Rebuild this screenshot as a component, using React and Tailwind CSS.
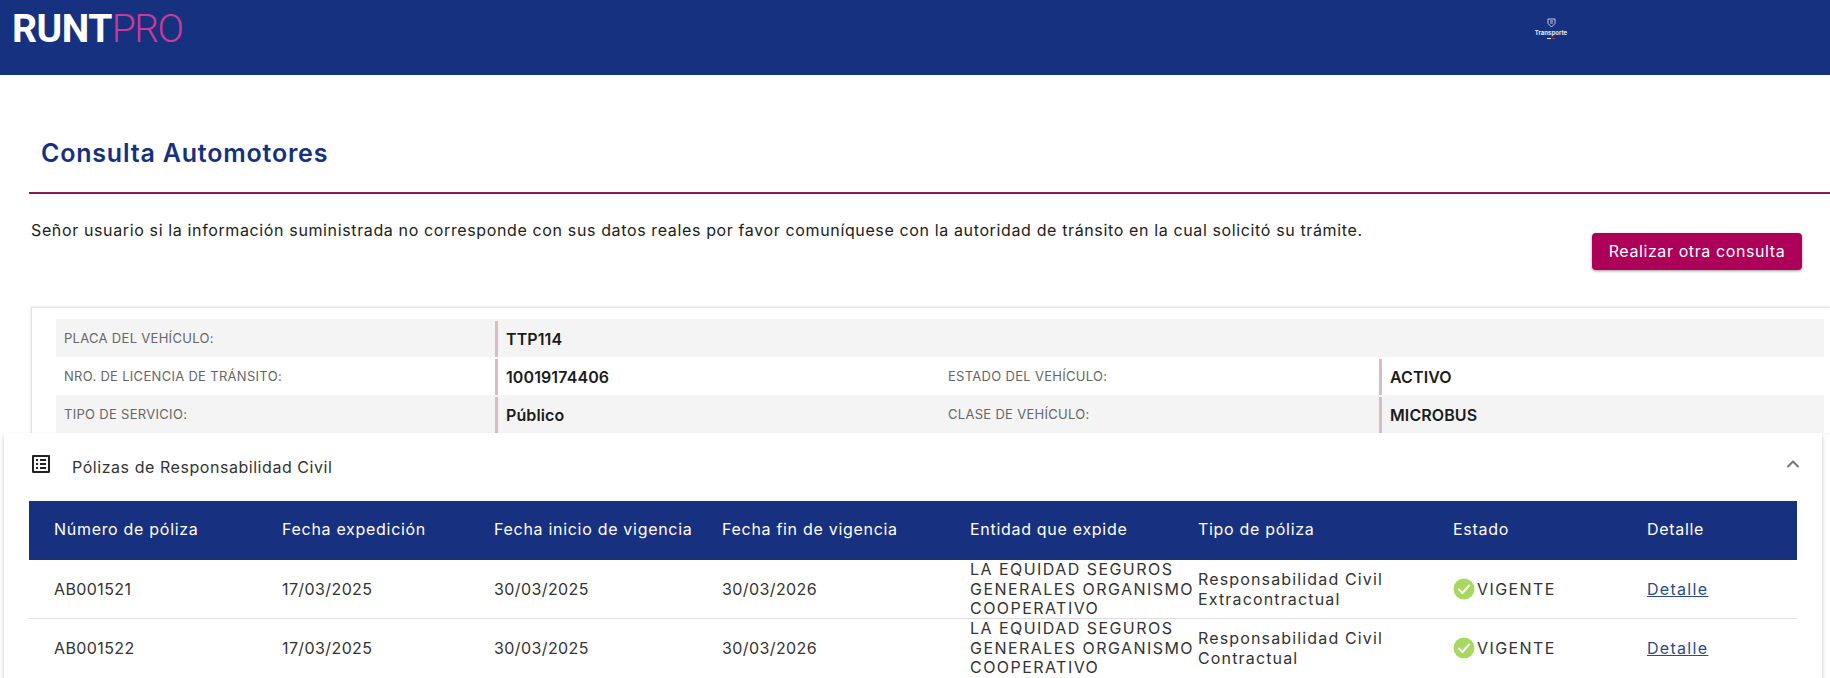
import { ChevronUp } from 'lucide-react';
import { MdOutlineListAlt } from 'react-icons/md';

const polizas = [
    { numero: 'AB001521', expedicion: '17/03/2025', inicio: '30/03/2025', fin: '30/03/2026', tipo: ['Responsabilidad Civil', 'Extracontractual'] },
    { numero: 'AB001522', expedicion: '17/03/2025', inicio: '30/03/2025', fin: '30/03/2026', tipo: ['Responsabilidad Civil', 'Contractual'] },
];

const columnas = ['Número de póliza', 'Fecha expedición', 'Fecha inicio de vigencia', 'Fecha fin de vigencia', 'Entidad que expide', 'Tipo de póliza', 'Estado', 'Detalle'];

const gridTabla = 'grid grid-cols-[228px_212px_228px_248px_228px_255px_194px_1fr] pl-[25px]';

const Label = ({ children }) => (
    <div className="flex items-center pl-2 pt-[1px] text-[13px] text-[#666] tracking-[0.3px]">{children}</div>
);

const Valor = ({ children }) => (
    <div className="flex items-center mt-[2px] pb-[1px] h-[36px] border-l-[3px] border-[#d9bcc3] pl-[8px] text-[16px] font-semibold text-[#1c1c1c] tracking-[0.1px]">{children}</div>
);

const Check = () => (
    <svg width="22" height="22" viewBox="0 0 22 22" className="shrink-0">
        <circle cx="11" cy="11" r="10.5" fill="#a8d95f" />
        <path d="M6 11.500l3.500 3.500L16 7.500" fill="none" stroke="#fff" strokeWidth="2" strokeLinecap="round" strokeLinejoin="round" />
    </svg>
);

const App = () => {
    return (
        <div className="h-screen overflow-hidden bg-white font-['Inter',sans-serif]">
            {/* Header */}
            <header className="flex h-[75px] bg-[#163180]">
                <div className="ml-[12px] mt-[7px] h-[44px] w-[180px] font-['Roboto',sans-serif] text-[39px] leading-[44px] tracking-[-0.5px]">
                    <span className="font-bold text-white">RUNT</span>
                    <span className="font-light tracking-[-1.5px] text-[#c93b97]">PRO</span>
                </div>
                <div className="ml-[1344px] mt-[18px] flex w-[30px] flex-col items-center opacity-90">
                    <svg width="9" height="10" viewBox="0 0 9 10" fill="none" stroke="#d5dcf0" strokeWidth="1">
                        <path d="M1 1h7v4.500L4.500 9 1 5.500z" />
                        <path d="M3 3h3M3 5h3" />
                    </svg>
                    <span className="whitespace-nowrap text-[6px] leading-[9px] font-bold text-white">Transporte</span>
                    <div className="mt-[1px] flex gap-[1px]">
                        <span className="h-[1px] w-[4px] bg-white" />
                        <span className="h-[1px] w-[3px] bg-[#b33a55]" />
                    </div>
                </div>
            </header>

            {/* Title */}
            <div className="ml-[29px] flex h-[119px] items-end border-b-2 border-[#86195a] pb-[23px] pl-[12px]">
                <h1 className="text-[25px] leading-[32px] font-semibold text-[#163180] tracking-[0.8px]">Consulta Automotores</h1>
            </div>

            {/* Aviso */}
            <div className="flex h-[113px] items-start justify-between pl-[31px] pr-[28px]">
                <p className="mt-[25px] text-[16px] leading-[22px] tracking-[0.63px] text-[#222]">Señor usuario si la información suministrada no corresponde con sus datos reales por favor comuníquese con la autoridad de tránsito en la cual solicitó su trámite.</p>
                <button className="mt-[39px] h-[37px] w-[210px] shrink-0 rounded-[4px] bg-[#ad0058] pb-[2px] text-[16px] tracking-[0.6px] text-white shadow-[0_1px_3px_rgba(0,0,0,0.4)]">Realizar otra consulta</button>
            </div>

            {/* Datos vehiculo */}
            <div className="ml-[31px] border-t border-l border-[#e2e2e2] pt-[11px] pl-[24px] pr-[6px] shadow-[0_0_3px_rgba(0,0,0,0.12)]">
                <div className="grid h-[38px] grid-cols-[439px_445px_439px_1fr] bg-[#f4f4f4]">
                    <Label>PLACA DEL VEHÍCULO:</Label>
                    <Valor>TTP114</Valor>
                </div>
                <div className="grid h-[38px] grid-cols-[439px_445px_439px_1fr]">
                    <Label>NRO. DE LICENCIA DE TRÁNSITO:</Label>
                    <Valor>10019174406</Valor>
                    <Label>ESTADO DEL VEHÍCULO:</Label>
                    <Valor>ACTIVO</Valor>
                </div>
                <div className="grid h-[38px] grid-cols-[439px_445px_439px_1fr] bg-[#f4f4f4]">
                    <Label>TIPO DE SERVICIO:</Label>
                    <Valor>Público</Valor>
                    <Label>CLASE DE VEHÍCULO:</Label>
                    <Valor>MICROBUS</Valor>
                </div>
            </div>

            {/* Polizas */}
            <div className="relative ml-[4px] mr-[8px] bg-white pb-[20px] pl-[25px] pr-[25px] shadow-[0_3px_4px_rgba(0,0,0,0.25)]">
                <div className="flex h-[68px] items-center">
                    <MdOutlineListAlt size={24} className="-mt-[6px] text-[#222]" />
                    <span className="ml-[19px] text-[16px] tracking-[0.55px] text-[#333]">Pólizas de Responsabilidad Civil</span>
                    <ChevronUp size={20} strokeWidth={2.5} className="ml-auto mr-[-6px] -mt-[6px] text-[#777]" />
                </div>
                <div className={`${gridTabla} h-[59px] items-center bg-[#183080] pb-[3px] text-[16px] tracking-[0.7px] text-white`}>
                    {columnas.map(c => (
                        <div key={c}>{c}</div>
                    ))}
                </div>
                {polizas.map((p, i) => (
                    <div key={p.numero} className={`${gridTabla} h-[59px] items-center pb-[1px] text-[16px] text-[#333] ${i === 0 ? 'border-b border-[#ddd]' : ''}`}>
                        <div className="tracking-[0.4px]">{p.numero}</div>
                        <div className="tracking-[0.4px]">{p.expedicion}</div>
                        <div className="tracking-[0.4px]">{p.inicio}</div>
                        <div className="tracking-[0.4px]">{p.fin}</div>
                        <div className="leading-[19.5px] tracking-[1.45px] whitespace-nowrap">LA EQUIDAD SEGUROS<br />GENERALES ORGANISMO<br />COOPERATIVO</div>
                        <div className="leading-[20px] tracking-[1.15px]">{p.tipo[0]}<br />{p.tipo[1]}</div>
                        <div className="flex items-center gap-[2px] tracking-[1.4px]"><Check />VIGENTE</div>
                        <a href="#" className="text-[#2a4a8c] underline tracking-[1.3px]">Detalle</a>
                    </div>
                ))}
            </div>
        </div>
    );
};

export default App;
